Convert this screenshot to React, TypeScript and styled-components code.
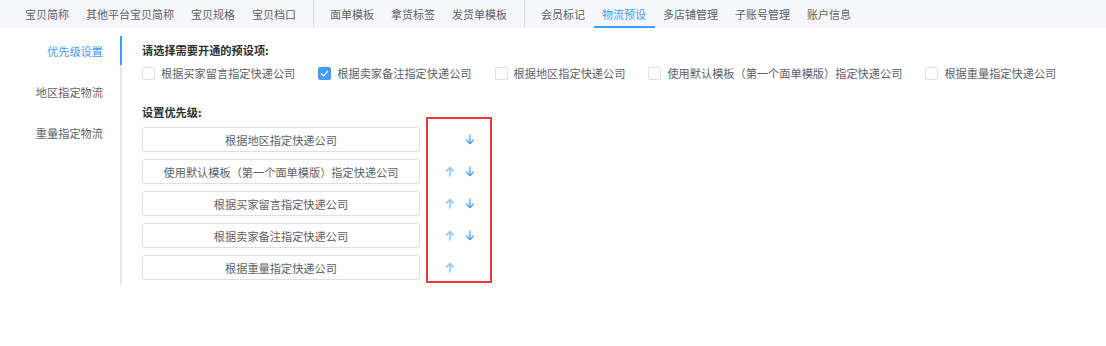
import React from "react"
import styled, { createGlobalStyle } from "styled-components"

const GlobalStyle = createGlobalStyle`
  body {
    margin: 0;
    background: #fff;
    font-family: "Noto Sans CJK SC", "Noto Sans", sans-serif;
    font-size: 11.2px;
    color: #606266;
  }
`

const TopNav = styled.nav`
  display: flex;
  align-items: stretch;
  height: 28px;
  padding-left: 16.5px;
  background-color: #f5f7fa;
  font-size: 11px;
`

const NavItem = styled.div<{ $active?: boolean }>`
  display: flex;
  align-items: center;
  padding: 0 8.5px 1px;
  line-height: 16px;
  white-space: nowrap;
  color: ${(p) => (p.$active ? "#409eff" : "#606266")};
  box-shadow: ${(p) => (p.$active ? "inset 0 -2px 0 #409eff" : "none")};
`

const NavDivider = styled.div`
  width: 1px;
  margin: 0 8px;
  background-color: #dcdfe6;
`

const Body = styled.div`
  display: flex;
  padding-top: 8px;
`

const SideMenu = styled.aside`
  width: 120px;
  height: 249px;
  border-right: 2px solid #e4e7ed;
  display: flex;
  flex-direction: column;
  gap: 12px;
`

const MenuItem = styled.div<{ $active?: boolean }>`
  height: 29px;
  margin-right: -2px;
  padding-right: 17px;
  display: flex;
  align-items: center;
  justify-content: flex-end;
  color: ${(p) => (p.$active ? "#409eff" : "#606266")};
  border-right: 2px solid ${(p) => (p.$active ? "#409eff" : "transparent")};
`

const Main = styled.main`
  padding: 6px 0 0 20px;
  display: flex;
  flex-direction: column;
`

const SectionTitle = styled.div`
  font-weight: bold;
  color: #303133;
  line-height: 16px;
`

const CheckRow = styled.div`
  display: flex;
  align-items: center;
  margin: 7px 0 23px;
  line-height: 16px;
`

const CheckItem = styled.label`
  display: flex;
  align-items: center;
  margin-right: 23px;
  white-space: nowrap;
`

const Box = styled.span<{ $checked?: boolean }>`
  width: 13px;
  height: 13px;
  box-sizing: border-box;
  margin-right: 6px;
  border-radius: 2px;
  border: 1px solid ${(p) => (p.$checked ? "#409eff" : "#dcdfe6")};
  background-color: ${(p) => (p.$checked ? "#409eff" : "#fff")};
  display: flex;
  align-items: center;
  justify-content: center;
`

const PriorityArea = styled.div`
  display: flex;
  margin-top: 7px;
`

const PriorityList = styled.div`
  display: flex;
  flex-direction: column;
  gap: 7px;
`

const PriorityItem = styled.div`
  width: 278px;
  height: 25px;
  box-sizing: border-box;
  border: 1px solid #dcdfe6;
  border-radius: 3px;
  display: flex;
  align-items: center;
  justify-content: center;
  color: #606266;
`

const ArrowColumn = styled.div`
  position: relative;
  display: flex;
  flex-direction: column;
  gap: 7px;
  padding-left: 25px;
`

const Highlight = styled.div`
  position: absolute;
  left: 6px;
  top: -10px;
  width: 66px;
  height: 166px;
  box-sizing: border-box;
  border: 2px solid #ef3737;
  pointer-events: none;
`

const ArrowRow = styled.div`
  height: 25px;
  display: flex;
  align-items: center;
  gap: 10px;
`

const ArrowSlot = styled.span<{ $hidden?: boolean }>`
  width: 10px;
  height: 11px;
  display: flex;
  visibility: ${(p) => (p.$hidden ? "hidden" : "visible")};
`

const Arrow = ({ dir }: { dir: "up" | "down" }) => {
  const up = dir === "up"
  return (
    <svg width="10" height="11" viewBox="0 0 10 11">
      <g
        fill="none"
        stroke={up ? "#8cc4ff" : "#409eff"}
        strokeWidth={up ? 1.6 : 1.2}
        strokeLinecap="round"
        strokeLinejoin="round"
        transform={up ? undefined : "rotate(180 5 5.5)"}
      >
        <path d="M5 1.5 V10" />
        <path d="M1.5 5 L5 1.5 L8.5 5" />
      </g>
    </svg>
  )
}

const navGroups = [
  ["宝贝简称", "其他平台宝贝简称", "宝贝规格", "宝贝档口"],
  ["面单模板", "拿货标签", "发货单模板"],
  ["会员标记", "物流预设", "多店铺管理", "子账号管理", "账户信息"],
]

const options = [
  { label: "根据买家留言指定快递公司", checked: false },
  { label: "根据卖家备注指定快递公司", checked: true },
  { label: "根据地区指定快递公司", checked: false },
  { label: "使用默认模板（第一个面单模版）指定快递公司", checked: false },
  { label: "根据重量指定快递公司", checked: false },
]

const priorities = [
  "根据地区指定快递公司",
  "使用默认模板（第一个面单模版）指定快递公司",
  "根据买家留言指定快递公司",
  "根据卖家备注指定快递公司",
  "根据重量指定快递公司",
]

export default function App() {
  return (
    <>
      <GlobalStyle />
      <TopNav>
        {navGroups.map((group, gi) => (
          <React.Fragment key={gi}>
            {gi > 0 && <NavDivider />}
            {group.map((name) => (
              <NavItem key={name} $active={name === "物流预设"}>
                {name}
              </NavItem>
            ))}
          </React.Fragment>
        ))}
      </TopNav>
      <Body>
        <SideMenu>
          <MenuItem $active>优先级设置</MenuItem>
          <MenuItem>地区指定物流</MenuItem>
          <MenuItem>重量指定物流</MenuItem>
        </SideMenu>
        <Main>
          <SectionTitle>请选择需要开通的预设项:</SectionTitle>
          <CheckRow>
            {options.map((o) => (
              <CheckItem key={o.label}>
                <Box $checked={o.checked}>
                  {o.checked && (
                    <svg width="9" height="7" viewBox="0 0 9 7">
                      <path
                        d="M1 3.5 L3.5 6 L8 1"
                        fill="none"
                        stroke="#fff"
                        strokeWidth="1.2"
                      />
                    </svg>
                  )}
                </Box>
                {o.label}
              </CheckItem>
            ))}
          </CheckRow>
          <SectionTitle>设置优先级:</SectionTitle>
          <PriorityArea>
            <PriorityList>
              {priorities.map((p) => (
                <PriorityItem key={p}>{p}</PriorityItem>
              ))}
            </PriorityList>
            <ArrowColumn>
              <Highlight />
              {priorities.map((p, i) => (
                <ArrowRow key={p}>
                  <ArrowSlot $hidden={i === 0}>
                    <Arrow dir="up" />
                  </ArrowSlot>
                  <ArrowSlot $hidden={i === priorities.length - 1}>
                    <Arrow dir="down" />
                  </ArrowSlot>
                </ArrowRow>
              ))}
            </ArrowColumn>
          </PriorityArea>
        </Main>
      </Body>
    </>
  )
}
